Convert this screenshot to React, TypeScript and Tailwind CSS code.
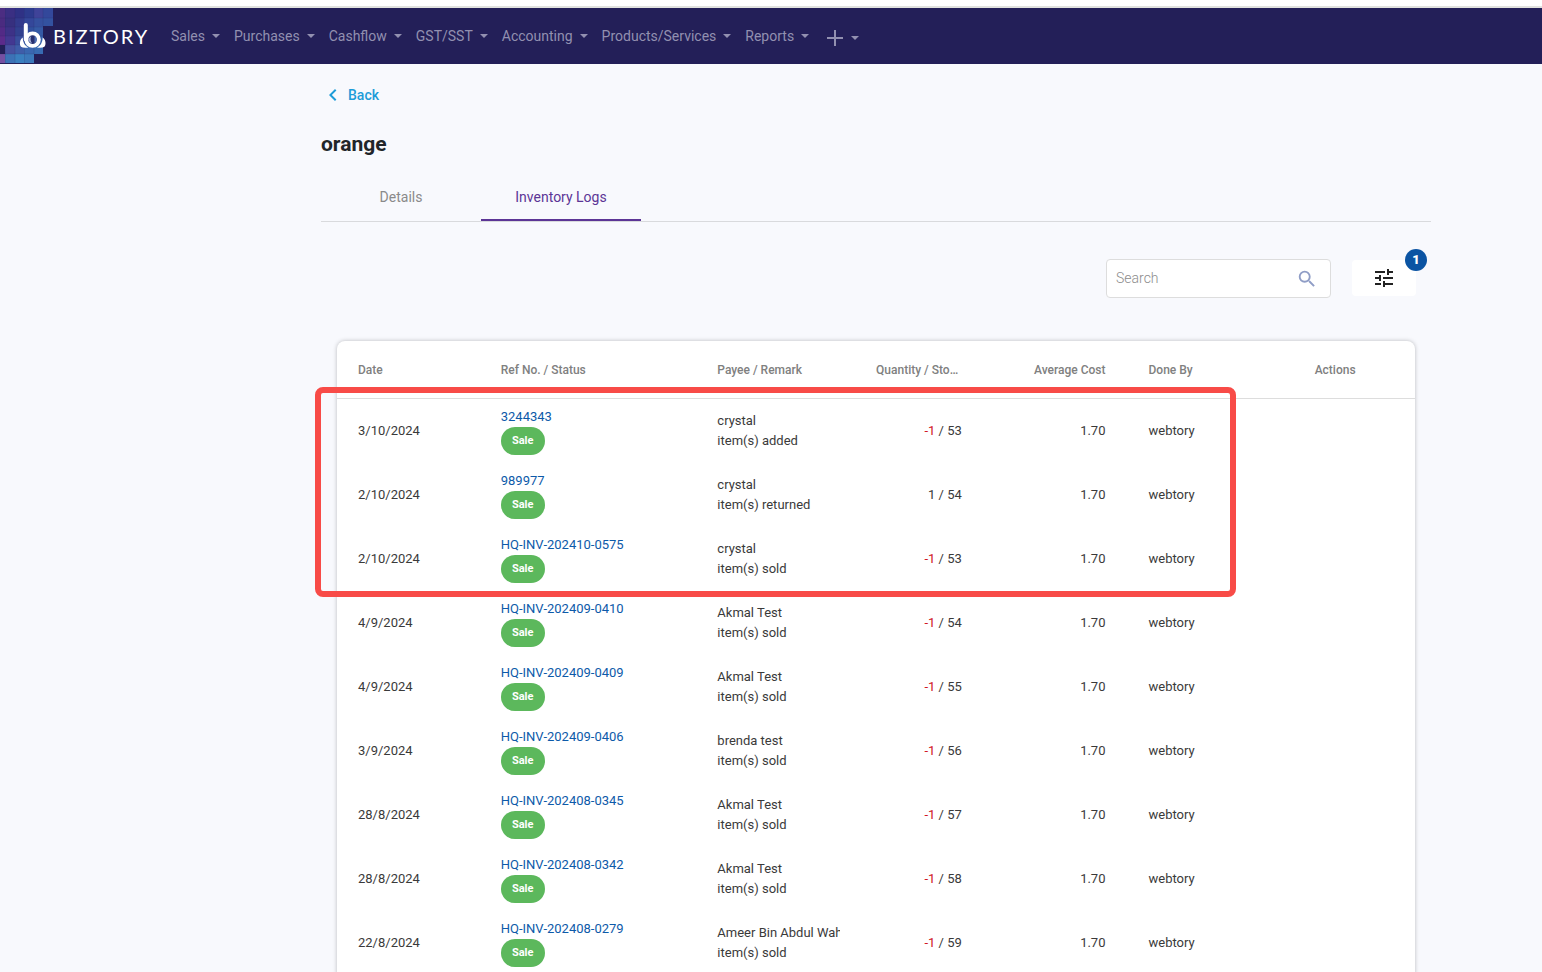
import { MdChevronLeft, MdSearch, MdTune } from 'react-icons/md';

const menus = ['Sales', 'Purchases', 'Cashflow', 'GST/SST', 'Accounting', 'Products/Services', 'Reports'];

const logs = [
  { date: '3/10/2024', ref: '3244343', payee: 'crystal', remark: 'item(s) added', qty: -1, stock: 53 },
  { date: '2/10/2024', ref: '989977', payee: 'crystal', remark: 'item(s) returned', qty: 1, stock: 54 },
  { date: '2/10/2024', ref: 'HQ-INV-202410-0575', payee: 'crystal', remark: 'item(s) sold', qty: -1, stock: 53 },
  { date: '4/9/2024', ref: 'HQ-INV-202409-0410', payee: 'Akmal Test', remark: 'item(s) sold', qty: -1, stock: 54 },
  { date: '4/9/2024', ref: 'HQ-INV-202409-0409', payee: 'Akmal Test', remark: 'item(s) sold', qty: -1, stock: 55 },
  { date: '3/9/2024', ref: 'HQ-INV-202409-0406', payee: 'brenda test', remark: 'item(s) sold', qty: -1, stock: 56 },
  { date: '28/8/2024', ref: 'HQ-INV-202408-0345', payee: 'Akmal Test', remark: 'item(s) sold', qty: -1, stock: 57 },
  { date: '28/8/2024', ref: 'HQ-INV-202408-0342', payee: 'Akmal Test', remark: 'item(s) sold', qty: -1, stock: 58 },
  { date: '22/8/2024', ref: 'HQ-INV-202408-0279', payee: 'Ameer Bin Abdul Wahab', remark: 'item(s) sold', qty: -1, stock: 59 },
];

// x, y, width, height, colour of each mosaic tile behind the logo
const tiles: [number, number, number, number, string][] = [
  [0, 0, 5, 10, '#4b2d82'], [5, 0, 10, 10, '#3a2f83'], [15, 0, 9, 10, '#2f3185'], [24, 0, 10, 10, '#2d3b8e'], [34, 0, 9, 10, '#3f4399'], [43, 0, 10, 10, '#33489b'],
  [0, 10, 5, 9, '#4a2b80'], [5, 10, 10, 9, '#37307f'], [15, 10, 9, 9, '#333a8c'], [24, 10, 10, 9, '#34479a'], [34, 10, 9, 9, '#35509f'], [43, 10, 10, 8, '#3352a0'],
  [0, 19, 5, 9, '#522a86'], [5, 19, 10, 9, '#3d3287'], [15, 19, 9, 9, '#32408f'], [24, 19, 10, 9, '#31509e'], [34, 19, 9, 9, '#355aa5'],
  [0, 28, 5, 9, '#5b2b8b'], [5, 28, 10, 9, '#433891'], [15, 28, 9, 9, '#394d9c'], [24, 28, 10, 9, '#355ca8'], [34, 28, 9, 9, '#3561ab'],
  [5, 37, 10, 9, '#4650a0'], [15, 37, 9, 9, '#3f5da9'], [24, 37, 10, 9, '#3a67b0'], [34, 37, 9, 9, '#386bb2'],
  [0, 46, 5, 9, '#7550a2'], [5, 46, 10, 9, '#3c72b6'], [15, 46, 9, 9, '#3a7fbf'], [24, 46, 10, 9, '#3b78ba'],
];

function Logo() {
  return (
    <a href="#" aria-label="Biztory" className="flex h-full w-[171px] shrink-0 items-center">
      <svg width="53" height="56" viewBox="0 0 53 56" className="shrink-0" aria-hidden="true">
        {tiles.map(([x, y, w, h, fill]) => (
          <rect key={`${x}-${y}`} x={x} y={y} width={w} height={h} fill={fill} />
        ))}
        <path d="M5.5 0V55M15 0V55M24.5 0V55M34 0V46M43 0V18M0 10H53M0 19H43M0 28H43M0 37H43M0 46H34" stroke="#231f58" strokeOpacity="0.25" strokeWidth="0.6" />
        {/* cloud lobes either side of the b */}
        <path d="M22.8 29.5C20 31 19 36 21 38.8Q23 40.2 28.5 39.6C24.4 37.5 22.8 34 22.8 29.5Z" fill="#fff" />
        <path d="M42.6 29.5C45.4 31 46.6 36 44.4 38.8Q42.4 40.2 36.9 39.6C41 37.5 42.6 34 42.6 29.5Z" fill="#fff" />
        <circle cx="32.6" cy="31.6" r="4.5" fill="#27306f" />
        <path d="M34.5 27.5A4.5 4.5 0 0 1 34.5 35.500Z" fill="#4a6db4" />
        <path d="M31.300 28Q29.500 31.500 32 35.500L29.500 34L28 31Z" fill="#a9b5dc" />
        <circle cx="32.6" cy="31.6" r="6.3" fill="none" stroke="#fff" strokeWidth="3.8" />
        <path d="M25.8 17V31.500" stroke="#fff" strokeWidth="4" strokeLinecap="round" />
      </svg>
      <span className="font-[Lato,sans-serif] text-xl leading-none tracking-widest text-white">BIZTORY</span>
    </a>
  );
}

function Caret() {
  return (
    <svg width="8" height="4" viewBox="0 0 8 4" fill="currentColor" aria-hidden="true">
      <path d="M0 0h8L4 4z" />
    </svg>
  );
}

function NavBar() {
  return (
    <nav className="flex h-14 items-center bg-[#231f58] text-sm text-[#9290b0]">
      <Logo />
      <div className="flex items-center gap-[14px]">
        {menus.map((menu) => (
          <button key={menu} type="button" className="flex items-center gap-[7px]">
            {menu}
            <Caret />
          </button>
        ))}
        <button type="button" aria-label="Add new" className="ml-1 flex items-center gap-2 pt-1">
          <svg width="16" height="16" viewBox="0 0 16 16" stroke="currentColor" strokeWidth="2" aria-hidden="true">
            <path d="M8 0v16M0 8h16" />
          </svg>
          <Caret />
        </button>
      </div>
    </nav>
  );
}

function Toolbar() {
  return (
    <div className="mt-[37px] flex items-start justify-end gap-[21px] pr-[15px]">
      <label className="flex h-[39px] w-[225px] items-center rounded border border-[#dddddd] bg-white pr-3 pl-[9px]">
        <span className="sr-only">Search</span>
        <input
          type="text"
          placeholder="Search"
          className="min-w-0 flex-1 pb-0.5 text-sm font-light text-[#333333] outline-none placeholder:text-[#8c8c8c]"
        />
        <MdSearch className="size-[22px] text-[#8f9dc6]" />
      </label>
      <button type="button" aria-label="Filters" className="relative mt-px flex h-9 w-16 items-center justify-center rounded bg-white text-[#222222]">
        <MdTune className="size-6" />
        <span className="absolute -top-[11px] -right-[11px] flex size-[22px] items-center justify-center rounded-full bg-[#0b54a3] text-[13px] font-black text-white">
          1
        </span>
      </button>
    </div>
  );
}

function LogTable() {
  return (
    <div className="relative mx-4 mt-[43px] rounded-t-lg bg-white shadow-[0_0_4px_rgba(0,0,0,0.25)]">
      <table className="w-full table-fixed text-[13px] leading-5 text-[#3a3a3a]">
        <colgroup>
          <col className="w-[13.333%]" />
          <col className="w-[20%]" />
          <col className="w-[13.333%]" />
          <col className="w-[13.333%]" />
          <col className="w-[13.333%]" />
          <col className="w-[13.333%]" />
          <col className="w-[13.333%]" />
        </colgroup>
        <thead>
          <tr className="h-[58px] text-left text-xs text-[#808080] shadow-[inset_0_-1px_0_#dddddd]">
            <th className="pl-[21px] font-medium">Date</th>
            <th className="pl-5 font-medium">Ref No. / Status</th>
            <th className="pl-[21px] font-medium">Payee / Remark</th>
            <th className="pr-[21px] pl-9 font-medium">
              <div className="truncate">Quantity / Stock Balance</div>
            </th>
            <th className="pr-[22px] text-right font-medium">Average Cost</th>
            <th className="pl-[21px] font-medium">Done By</th>
            <th className="pr-4 text-center font-medium">Actions</th>
          </tr>
        </thead>
        <tbody>
          {logs.map((log) => (
            <tr key={log.ref} className="h-16">
              <td className="pl-[21px]">{log.date}</td>
              <td className="pl-5">
                <div className="flex flex-col items-start">
                  <a href="#" className="text-[#0d5aa9]">{log.ref}</a>
                  <span className="flex h-7 w-11 items-center justify-center rounded-full bg-[#5cb85c] pb-px text-[11px] font-bold text-white">
                    Sale
                  </span>
                </div>
              </td>
              <td className="overflow-hidden pl-[21px] whitespace-nowrap">
                <div>{log.payee}</div>
                <div>{log.remark}</div>
              </td>
              <td className="pr-[22px] text-right">
                <span className={log.qty < 0 ? 'text-[#cf1526]' : ''}>{log.qty}</span> / {log.stock}
              </td>
              <td className="pr-[22px] text-right">1.70</td>
              <td className="pl-[21px]">webtory</td>
              <td />
            </tr>
          ))}
        </tbody>
      </table>

      {/* Highlight around the latest three entries */}
      <div className="pointer-events-none absolute top-[46px] right-[179px] -left-[22px] h-[210px] rounded-lg border-6 border-[#f84b47]" />
    </div>
  );
}

export default function App() {
  return (
    <div className="min-h-screen bg-[#f8f9fd] font-[Roboto,sans-serif]">
      <header className="border-t-6 border-white bg-[#e1e2df] pt-0.5">
        <NavBar />
      </header>

      <main className="pl-[210px]">
        <div className="mx-auto max-w-[1110px] pt-[19px]">
          <a href="#" className="flex w-fit items-center gap-[3px] text-sm font-medium text-[#1e9cd8]">
            <MdChevronLeft className="size-6" />
            Back
          </a>
          <h1 className="mt-[22px] text-[21px] leading-[30px] font-bold text-[#212529]">orange</h1>

          <div role="tablist" className="mt-[14px] flex h-[49px] border-b border-[#d9dadd] text-sm">
            <button type="button" role="tab" aria-selected="false" className="w-40 text-[#8a8a8a]">
              Details
            </button>
            <button type="button" role="tab" aria-selected="true" className="w-40 border-b-2 border-[#5c3596] pt-0.5 text-[#5c3596]">
              Inventory Logs
            </button>
          </div>

          <Toolbar />
          <LogTable />
        </div>
      </main>
    </div>
  );
}
